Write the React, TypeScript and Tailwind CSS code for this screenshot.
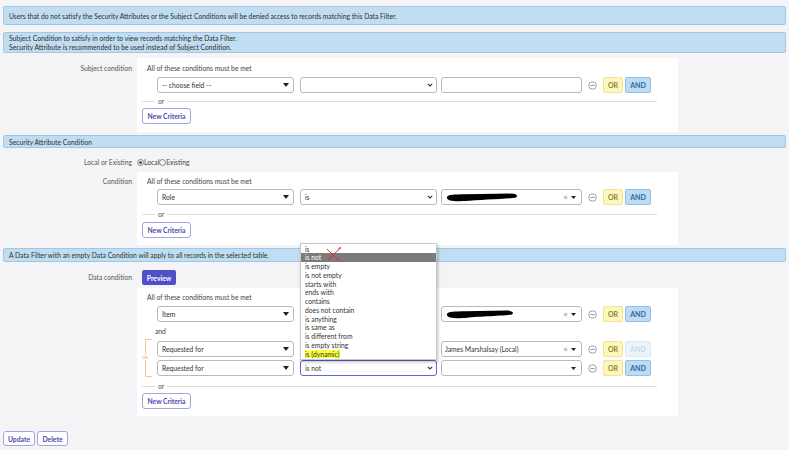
import React from "react";

const caretDown = (
  <svg width="6" height="4" viewBox="0 0 6 4" className="shrink-0">
    <path d="M0 0 L6 0 L3 4 Z" fill="#222" />
  </svg>
);

const chevron = (
  <svg width="6" height="4" viewBox="0 0 6 4" className="shrink-0">
    <path d="M0.8 0.8 L3 3 L5.2 0.8" fill="none" stroke="#333" strokeWidth="1.1" />
  </svg>
);

/* Small "x" clear marker used in reference pickers */
function Clear() {
  return <span className="text-[#888] text-[8px] leading-none mr-[3px]">×</span>;
}

function Redacted({ w }: { w: number }) {
  return (
    <svg width={w} height="9" viewBox={`0 0 ${w} 9`} className="shrink-0">
      <path
        d={`M2 4 C3 1 10 1.5 20 1.2 L${w - 8} 0.6 C${w - 2} 0.8 ${w - 1} 3 ${w - 3} 4.5 C${w - 12} 6 ${w - 40} 6.5 20 8 C8 8.6 1 7.5 2 4 Z`}
        fill="#000"
      />
    </svg>
  );
}

function FieldSelect({ label }: { label: string }) {
  return (
    <div className="w-[137px] h-[16px] bg-white border border-[#b9b9b9] rounded-[3px] flex items-center justify-between pl-[4px] pr-[4px]">
      <span className="text-[#333]">{label}</span>
      {caretDown}
    </div>
  );
}

function OpSelect({ label, focused }: { label: string; focused?: boolean }) {
  return (
    <div
      className={`w-[137px] h-[16px] bg-white rounded-[3px] flex items-center justify-between pl-[4px] pr-[3px] ${
        focused ? "border-[1.5px] border-[#5b66d8]" : "border border-[#b9b9b9]"
      }`}
    >
      <span className="text-[#333]">{label}</span>
      {chevron}
    </div>
  );
}

function ValueBox({ children, clear, caret }: { children?: React.ReactNode; clear?: boolean; caret?: boolean }) {
  return (
    <div className="w-[141px] h-[16px] bg-white border border-[#b9b9b9] rounded-[3px] flex items-center pl-[3px] pr-[5px]">
      <div className="flex-1 flex items-center min-w-0">{children}</div>
      {clear && <Clear />}
      {caret && (
        <svg width="5" height="3" viewBox="0 0 5 3">
          <path d="M0 0 L5 0 L2.5 3 Z" fill="#222" />
        </svg>
      )}
    </div>
  );
}

function MinusCircle() {
  return (
    <svg width="9" height="9" viewBox="0 0 10 10" className="shrink-0">
      <circle cx="5" cy="5" r="4.2" fill="none" stroke="#8d91a3" strokeWidth="1" />
      <path d="M2.6 5 H7.4" stroke="#8d91a3" strokeWidth="1" />
    </svg>
  );
}

function OrAnd({ andDisabled }: { andDisabled?: boolean }) {
  return (
    <div className="flex items-center">
      <span className="ml-[6px]"><MinusCircle /></span>
      <div className="ml-[6px] w-[20px] h-[16px] bg-[#fdf6bd] border border-[#f0e48f] rounded-[2px] flex items-center justify-center font-bold text-[#8f8630] text-[7px]">
        OR
      </div>
      <div
        className={`ml-[2px] w-[26px] h-[16px] rounded-[2px] flex items-center justify-center font-bold text-[7px] border ${
          andDisabled ? "bg-[#eef4fb] border-[#dbe8f5] text-[#c7d8ea]" : "bg-[#bddbf3] border-[#8fc0ea] text-[#2d67a2]"
        }`}
      >
        AND
      </div>
    </div>
  );
}

function Row({ field, op, focused, value, andDisabled }: {
  field: string;
  op: string;
  focused?: boolean;
  value: React.ReactNode;
  andDisabled?: boolean;
}) {
  return (
    <div className="flex items-center h-[16px]">
      <FieldSelect label={field} />
      <div className="ml-[6px]"><OpSelect label={op} focused={focused} /></div>
      <div className="ml-[4px]">{value}</div>
      <OrAnd andDisabled={andDisabled} />
    </div>
  );
}

function OrSeparator({ className }: { className: string }) {
  return (
    <div className={`flex items-center h-[10px] ml-[5px] mr-[21px] ${className}`}>
      <div className="w-[13px] h-px bg-[#dcdcdc]" />
      <span className="px-[3px] text-[#555]">or</span>
      <div className="flex-1 h-px bg-[#dcdcdc]" />
    </div>
  );
}

function NewCriteria({ className }: { className: string }) {
  return (
    <div className={`ml-[5px] w-[49px] h-[16px] border border-[#a3a3e3] rounded-[3px] bg-white flex items-center justify-center text-[#4a4aae] font-bold ${className}`}>
      New Criteria
    </div>
  );
}

function InfoBar({ children, className }: { children: React.ReactNode; className: string }) {
  return (
    <div className={`bg-[#c0ddf2] border border-[#9dc8ea] rounded-[2px] px-[5px] flex flex-col justify-center text-[#2f2f2f] ${className}`}>
      {children}
    </div>
  );
}

const OPERATORS = [
  "is",
  "is not",
  "is empty",
  "is not empty",
  "starts with",
  "ends with",
  "contains",
  "does not contain",
  "is anything",
  "is same as",
  "is different from",
  "is empty string",
  "is (dynamic)",
];

export default function App() {
  return (
    <div className="w-[789px] h-[450px] bg-[#f4f4f6] overflow-hidden relative font-['Lato','Open_Sans',sans-serif] text-[6.75px] leading-[10px] text-[#333]">
      <div className="flex flex-col px-[3px] pt-[6px]">
        <InfoBar className="h-[19px]">
          Users that do not satisfy the Security Attributes or the Subject Conditions will be denied access to records matching this Data Filter.
        </InfoBar>
        <InfoBar className="h-[21px] mt-[7px] leading-[9px]">
          <span>Subject Condition to satisfy in order to view records matching the Data Filter.</span>
          <span>Security Attribute is recommended to be used instead of Subject Condition.</span>
        </InfoBar>

        {/* Subject condition */}
        <div className="flex mt-[5px]">
          <div className="w-[134px] text-right pr-[5px] pt-[5px] text-[#555]">Subject condition</div>
          <div className="w-[541px] h-[74px] bg-white flex flex-col">
            <div className="mt-[5px] pl-[10px] h-[10px] text-[#444]">All of these conditions must be met</div>
            <div className="mt-[4px] pl-[20px]">
              <Row field="-- choose field --" op="" value={<ValueBox />} />
            </div>
            <OrSeparator className="mt-[3px]" />
            <NewCriteria className="mt-[2px]" />
          </div>
        </div>

        <InfoBar className="h-[13px] mt-[3px]">Security Attribute Condition</InfoBar>

        {/* Local or Existing */}
        <div className="flex mt-[9px] h-[10px] items-center">
          <div className="w-[134px] text-right pr-[5px] text-[#555]">Local or Existing</div>
          <div className="flex items-center text-[#444]">
            <span className="w-[7px] h-[7px] rounded-full border border-[#888] flex items-center justify-center">
              <span className="w-[3px] h-[3px] rounded-full bg-[#555]" />
            </span>
            <span>Local</span>
            <span className="w-[7px] h-[7px] rounded-full border border-[#888]" />
            <span>Existing</span>
          </div>
        </div>

        {/* Condition */}
        <div className="flex mt-[5px]">
          <div className="w-[134px] text-right pr-[5px] pt-[4px] text-[#555]">Condition</div>
          <div className="w-[541px] h-[73px] bg-white flex flex-col">
            <div className="mt-[4px] pl-[10px] h-[10px] text-[#444]">All of these conditions must be met</div>
            <div className="mt-[3px] pl-[20px]">
              <Row
                field="Role"
                op="is"
                value={
                  <ValueBox clear caret>
                    <Redacted w={74} />
                  </ValueBox>
                }
              />
            </div>
            <OrSeparator className="mt-[4px]" />
            <NewCriteria className="mt-[3px]" />
          </div>
        </div>

        <InfoBar className="h-[14px] mt-[3px]">A Data Filter with an empty Data Condition will apply to all records in the selected table.</InfoBar>

        {/* Data condition */}
        <div className="flex mt-[8px]">
          <div className="w-[134px] text-right pr-[5px] pt-[2px] text-[#555]">Data condition</div>
          <div className="flex flex-col">
            <div className="ml-[5px] w-[34px] h-[15px] bg-[#4d50c6] rounded-[2px] text-white font-bold flex items-center justify-center">
              Preview
            </div>
            <div className="mt-[3px] w-[541px] h-[128px] bg-white flex flex-col">
              <div className="mt-[4px] pl-[10px] h-[10px] text-[#444]">All of these conditions must be met</div>
              <div className="mt-[4px] pl-[20px]">
                {/* operator hidden under the open dropdown */}
                <Row
                  field="Item"
                  op=""
                  value={
                    <ValueBox clear caret>
                      <Redacted w={70} />
                    </ValueBox>
                  }
                />
              </div>
              <div className="mt-[4px] pl-[18px] h-[10px] text-[#444]">and</div>
              <div className="flex mt-[5px]">
                <div className="relative ml-[8px] mt-[-2px] w-[7px] h-[38px] border-l border-t border-b border-[#f3cd8f]">
                  <span className="absolute left-[-4px] top-[15px] bg-white text-[#d9a859] text-[4px] leading-[5px]">OR</span>
                </div>
                <div className="ml-[5px] flex flex-col">
                  <Row
                    field="Requested for"
                    op=""
                    andDisabled
                    value={
                      <ValueBox clear caret>
                        <span className="text-[#333]">James Marshalsay (Local)</span>
                      </ValueBox>
                    }
                  />
                  <div className="mt-[3px]">
                    <Row field="Requested for" op="is not" focused value={<ValueBox caret />} />
                  </div>
                </div>
              </div>
              <OrSeparator className="mt-[4px]" />
              <NewCriteria className="mt-[2px]" />
            </div>
          </div>
        </div>

        {/* Footer buttons */}
        <div className="flex mt-[15px] gap-[2px]">
          <div className="w-[32px] h-[15px] border border-[#a3a3e3] rounded-[3px] bg-white flex items-center justify-center text-[#4a4aae] font-bold">
            Update
          </div>
          <div className="w-[31px] h-[15px] border border-[#a3a3e3] rounded-[3px] bg-white flex items-center justify-center text-[#4a4aae] font-bold">
            Delete
          </div>
        </div>
      </div>

      {/* Open operator dropdown */}
      <div className="absolute left-[300px] top-[243px] w-[137px] bg-white border border-[#c9c9c9] shadow-[1px_2px_3px_rgba(0,0,0,0.25)] py-[0.5px]">
        {OPERATORS.map((op) => (
          <div
            key={op}
            className={`h-[8.75px] leading-[8.75px] pl-[4px] ${op === "is not" ? "bg-[#7b7b7b] text-white" : "text-[#333]"}`}
          >
            <span className={op === "is (dynamic)" ? "bg-[#fbff3c] pr-[1px]" : ""}>{op}</span>
          </div>
        ))}
      </div>

      {/* Red cross drawn over "is not" */}
      <svg className="absolute left-[325px] top-[246px]" width="18" height="17" viewBox="0 0 18 17">
        <path d="M2 3 C6 7 10 11 15 15" fill="none" stroke="#e0262a" strokeWidth="1" />
        <path d="M3 15 C7 10 11 6 16 1.5" fill="none" stroke="#e0262a" strokeWidth="1" />
        <path d="M13.5 2.5 L16 1.5" fill="none" stroke="#e0262a" strokeWidth="1" />
      </svg>
    </div>
  );
}
